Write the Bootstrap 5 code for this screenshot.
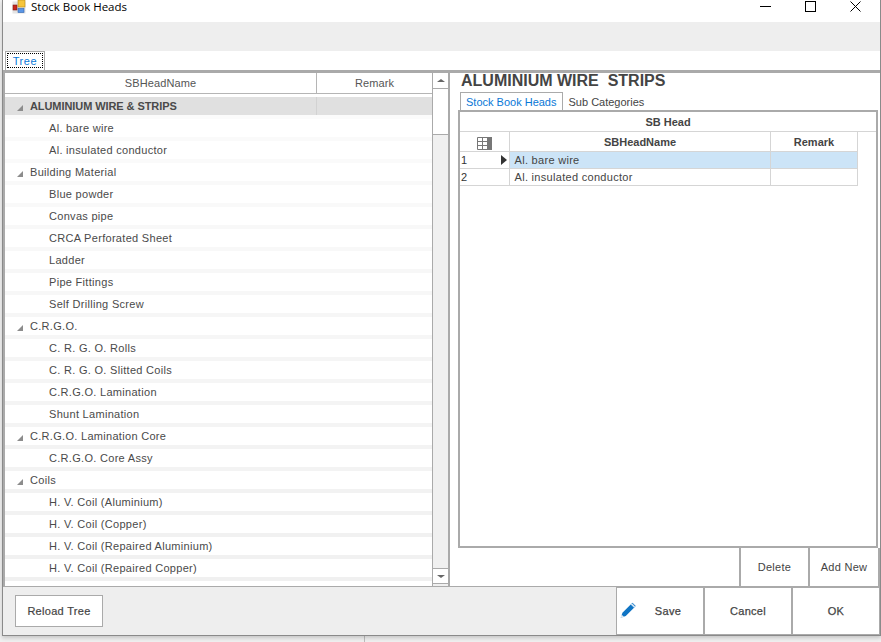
<!DOCTYPE html>
<html lang="en">
<head>
  <meta charset="UTF-8" />
  <meta name="viewport" content="width=device-width, initial-scale=1" />
  <title>Stock Book Heads</title>
  <link href="https://cdn.jsdelivr.net/npm/bootstrap@5.3.3/dist/css/bootstrap.min.css" rel="stylesheet" />
  <style>
    html, body { height: 100%; }
    body { background: linear-gradient(#bdbdbd, #bdbdbd) 364px 0 / 1px 100% no-repeat, #f0f0f0; overflow: hidden; font: 11px "Liberation Sans", Arial, sans-serif; color: #444; letter-spacing: .3px; }
    .app-window { width: 879px; height: 636px; margin-left: 2px; background: #fff; border: 1px solid #8a8a8a; border-top: 0; box-shadow: 0 2px 4px rgba(0,0,0,.18); }
    .app-window > * { flex-shrink: 0; }
    .title-bar { height: 22px; padding-left: 9px; font: 11.5px/14px "Open Sans", sans-serif; color: #000; letter-spacing: 0; }
    .win-btns { margin-left: auto; margin-right: 2px; }
    .win-btns span { width: 45px; height: 12px; display: flex; align-items: center; justify-content: center; }
    .tool-strip { height: 29px; background: #eee; }
    .tab-strip { height: 19px; padding: 0 0 0 2px; }
    .tree-tab { width: 40px; height: 19px; border: 1px solid #aaa; border-bottom: 0; padding: 1px; color: #0a78d7; letter-spacing: .6px; }
    .tree-tab span { display: block; height: 15px; line-height: 14px; border: 1px dotted #000; text-align: center; }
    .panes { height: 516px; border-top: 3px solid #aaa; }
    .left-pane { width: 447px; border-left: 2px solid #aaa; border-right: 1px solid #aaa; flex-shrink: 0; }
    .grid-side { width: 427px; }
    .grid-head { height: 21px; border-bottom: 1px solid #b5b5b5; line-height: 20px; text-align: center; margin-bottom: 3px; letter-spacing: .1px; color: #555; }
    .grid-head div:first-child { width: 312px; border-right: 1px solid #b5b5b5; }
    .grid-head div:last-child { width: 115px; }
    .tree-list { height: 489px; overflow: hidden; border-radius: 0; }
    .tree-list .tree-row { flex-shrink: 0; height: 22px; padding: 2px 0 0; line-height: 14px; background: #fff; border: 0; border-bottom: 4px solid #f5f5f5; border-radius: 0; color: #4a4a4a; }
    .tree-list .tree-row.leaf { padding-left: 44px; }
    .tree-list .tree-row.group { padding-left: 25px; position: relative; }
    .tree-row.group::before { content: ""; position: absolute; left: 12px; top: 8px; border-style: solid; border-width: 0 0 6px 6px; border-color: transparent transparent #8c8c8c transparent; }
    .tree-list .tree-row.picked { background: #e0e0e0; font-weight: 700; letter-spacing: -.08px; }
    .tree-mark { position: absolute; left: 311px; top: 0; bottom: 0; width: 1px; background: #d2d2d2; }
    .scroll-side { width: 17px; background: #f0f0f0; border-left: 1px solid #aaa; border-right: 1px solid #aaa; }
    .scroll-btn { height: 16px; background: #fff; border-bottom: 1px solid #aaa; display: flex; align-items: center; justify-content: center; flex-shrink: 0; }
    .scroll-thumb { height: 46px; background: #fff; border-bottom: 1px solid #aaa; }
    .scroll-btn.down { margin-top: auto; margin-bottom: 2px; border-top: 1px solid #aaa; border-bottom: 1px solid #aaa; }
    .arrow-up { border: 3px solid transparent; border-top: 0; border-bottom: 3px solid #666; border-left-width: 4px; border-right-width: 4px; }
    .arrow-down { border: 3px solid transparent; border-bottom: 0; border-top: 3px solid #666; border-left-width: 4px; border-right-width: 4px; }
    .right-pane { width: 430px; padding-left: 11px; }
    .head-title { height: 19px; margin: 0; font: 700 16px/15px "Liberation Sans", sans-serif; color: #444; letter-spacing: 0; white-space: pre; }
    .sub-tabs { height: 18px; margin-left: -1px; padding: 0; border: 0; flex-wrap: nowrap; letter-spacing: 0; }
    .sub-tabs .nav-link { height: 18px; padding: 2px 5px 0; border: 1px solid #aaa; border-bottom: 0; border-radius: 0; color: #0a78d7; background: #fff; line-height: 15px; margin: 0; font-size: 11px; }
    .sub-tabs .nav-link.idle { border-color: transparent; color: #444; }
    .grid-box { width: 420px; height: 438px; margin-left: -3px; border: 2px solid #aaa; flex-shrink: 0; }
    .caption-bar { height: 20px; line-height: 21px; text-align: center; font-weight: 700; letter-spacing: 0; border-bottom: 1px solid #d5d5d5; }
    .detail-grid { width: 397px; table-layout: fixed; margin: 0; }
    .detail-grid > :not(caption) > * > * { padding: 0 4px 0 5px; border: 0; border-right: 1px solid #d5d5d5; border-bottom: 1px solid #d5d5d5; color: #444; box-shadow: none; background: transparent; font-size: 11px; line-height: 14px; vertical-align: middle; }
    .detail-grid > thead > tr > th { height: 19px; padding-top: 2px; text-align: center; letter-spacing: 0; }
    .detail-grid td { height: 17px; }
    .detail-grid tr.current td { background: #cce4f7; }
    .detail-grid > tbody > tr > td.num { background: transparent; padding-left: 1px; color: #333; position: relative; }
    .row-arrow { position: absolute; right: 2px; top: 3px; border-style: solid; border-width: 5px 0 5px 6px; border-color: transparent transparent transparent #333; }
    .detail-actions { height: 38px; flex-shrink: 0; }
    .foot-bar { height: 49px; background: #eee; border-top: 1px solid #aaa; }
    .plain-btn { background: #fff; border: 0; border-radius: 0; color: #444; font: 11px "Liberation Sans", sans-serif; letter-spacing: .3px; padding: 0; }
    .plain-btn:hover { background: #fff; color: #444; }
    .detail-actions .plain-btn { width: 69px; border-left: 2px solid #aaa; }
    .detail-actions .plain-btn:last-child { width: 72px; border-right: 2px solid #aaa; }
    .reload-btn { width: 88px; height: 32px; margin: 8px 0 0 12px; border: 1px solid #aaa; -webkit-text-stroke: .2px #444; }
    .foot-actions { margin-left: auto; background: #aaa; gap: 2px; padding: 0 1px; height: 48px; }
    .foot-actions .plain-btn { width: 86px; margin-top: 1px; margin-bottom: 1px; -webkit-text-stroke: .25px #444; position: relative; }
    .foot-actions .save-btn { padding-left: 16px; }
    .save-icon { position: absolute; left: 1px; top: 12px; }
  </style>
</head>
<body>
  <div class="app-window d-flex flex-column">
    <div class="title-bar d-flex align-items-start">
      <svg width="15" height="15" viewBox="0 0 15 15" class="me-1">
        <rect x="0.5" y="1.5" width="13" height="12" fill="#e4e4e4" />
        <rect x="1" y="5" width="4" height="5" fill="#c8281e" stroke="#7d1a14" stroke-width=".6" />
        <rect x="6" y="0" width="7" height="7" fill="#f6c53c" stroke="#b48a14" stroke-width=".6" />
        <rect x="6" y="8.5" width="6" height="4" fill="#5a96e6" stroke="#2f63ad" stroke-width=".6" />
      </svg>
      <span>Stock Book Heads</span>
      <div class="win-btns d-flex">
        <span><svg width="11" height="11"><path d="M0 5.5h11" stroke="#000" /></svg></span>
        <span><svg width="11" height="11"><rect x=".5" y=".5" width="10" height="10" fill="none" stroke="#000" /></svg></span>
        <span><svg width="11" height="11"><path d="M.5.5l10 10M10.5.5l-10 10" stroke="#000" /></svg></span>
      </div>
    </div>
    <div class="tool-strip"></div>
    <div class="tab-strip"><div class="tree-tab"><span>Tree</span></div></div>

    <div class="panes d-flex">
      <div class="left-pane d-flex">
        <div class="grid-side">
          <div class="grid-head d-flex"><div>SBHeadName</div><div>Remark</div></div>
          <div class="tree-list list-group" id="treeList"></div>
        </div>
        <div class="scroll-side d-flex flex-column">
          <div class="scroll-btn"><i class="arrow-up"></i></div>
          <div class="scroll-thumb"></div>
          <div class="scroll-btn down"><i class="arrow-down"></i></div>
        </div>
      </div>

      <div class="right-pane d-flex flex-column">
        <h5 class="head-title">ALUMINIUM WIRE  STRIPS</h5>
        <ul class="nav sub-tabs">
          <li class="nav-item"><a class="nav-link active" href="#">Stock Book Heads</a></li>
          <li class="nav-item"><a class="nav-link idle" href="#">Sub Categories</a></li>
        </ul>
        <div class="grid-box">
          <div class="caption-bar">SB Head</div>
          <table class="table detail-grid">
            <colgroup><col style="width:49px"><col style="width:261px"><col style="width:87px"></colgroup>
            <thead>
              <tr>
                <th>
                  <svg width="15" height="13" viewBox="0 0 15 13">
                    <path d="M.5.5h14v12H.5zM.5 4.5h14M.5 8.5h14M5.5.5v12M10.5.5v12" fill="none" stroke="#777" />
                    <rect x="10" y="0" width="5" height="13" fill="#777" />
                  </svg>
                </th>
                <th>SBHeadName</th>
                <th>Remark</th>
              </tr>
            </thead>
            <tbody>
              <tr class="current"><td class="num">1<i class="row-arrow"></i></td><td>Al. bare wire</td><td></td></tr>
              <tr><td class="num">2</td><td>Al. insulated conductor</td><td></td></tr>
            </tbody>
          </table>
        </div>
        <div class="detail-actions d-flex justify-content-end">
          <button class="btn plain-btn">Delete</button>
          <button class="btn plain-btn">Add New</button>
        </div>
      </div>
    </div>

    <div class="foot-bar d-flex">
      <button class="btn plain-btn reload-btn">Reload Tree</button>
      <div class="foot-actions d-flex">
        <button class="btn plain-btn save-btn">
          <svg class="save-icon" width="20" height="20" viewBox="0 0 18 18">
            <path d="M4 11.5L13 2.5l3 3-9 9-4.5 1.5z" fill="#0f74c4" />
            <path d="M12 3.5l3 3" stroke="#cfe3f4" stroke-width="1.6" />
            <path d="M3.2 13l2.3 2.3-3.3 1z" fill="#dfeaf3" />
          </svg>Save</button>
        <button class="btn plain-btn">Cancel</button>
        <button class="btn plain-btn">OK</button>
      </div>
    </div>
  </div>

  <script>
    // Righe dell'albero: p = gruppo selezionato, g = gruppo, l = foglia
    const righe = [
      ['p', 'ALUMINIUM WIRE & STRIPS'], ['l', 'Al. bare wire'], ['l', 'Al. insulated conductor'],
      ['g', 'Building Material'], ['l', 'Blue powder'], ['l', 'Convas pipe'], ['l', 'CRCA Perforated Sheet'],
      ['l', 'Ladder'], ['l', 'Pipe Fittings'], ['l', 'Self Drilling Screw'],
      ['g', 'C.R.G.O.'], ['l', 'C. R. G. O. Rolls'], ['l', 'C. R. G. O. Slitted Coils'],
      ['l', 'C.R.G.O. Lamination'], ['l', 'Shunt Lamination'],
      ['g', 'C.R.G.O. Lamination Core'], ['l', 'C.R.G.O. Core Assy'],
      ['g', 'Coils'], ['l', 'H. V. Coil (Aluminium)'], ['l', 'H. V. Coil (Copper)'],
      ['l', 'H. V. Coil (Repaired Aluminium)'], ['l', 'H. V. Coil (Repaired Copper)']
    ];
    const lista = document.getElementById('treeList');
    righe.forEach(([tipo, testo], i) => {
      const riga = document.createElement('div');
      riga.className = 'tree-row list-group-item ' + (tipo === 'l' ? 'leaf' : 'group') + (tipo === 'p' ? ' picked' : '');
      riga.textContent = testo;
      // le strisce scuriscono verso il basso
      const grigio = Math.round(251 - (i / (righe.length - 1)) * 11);
      riga.style.borderBottomColor = `rgb(${grigio},${grigio},${grigio})`;
      if (tipo === 'p') {
        const segno = document.createElement('i');
        segno.className = 'tree-mark';
        riga.appendChild(segno);
      }
      lista.appendChild(riga);
    });
  </script>
  <script src="https://cdn.jsdelivr.net/npm/bootstrap@5.3.3/dist/js/bootstrap.bundle.min.js"></script>
</body>
</html>
